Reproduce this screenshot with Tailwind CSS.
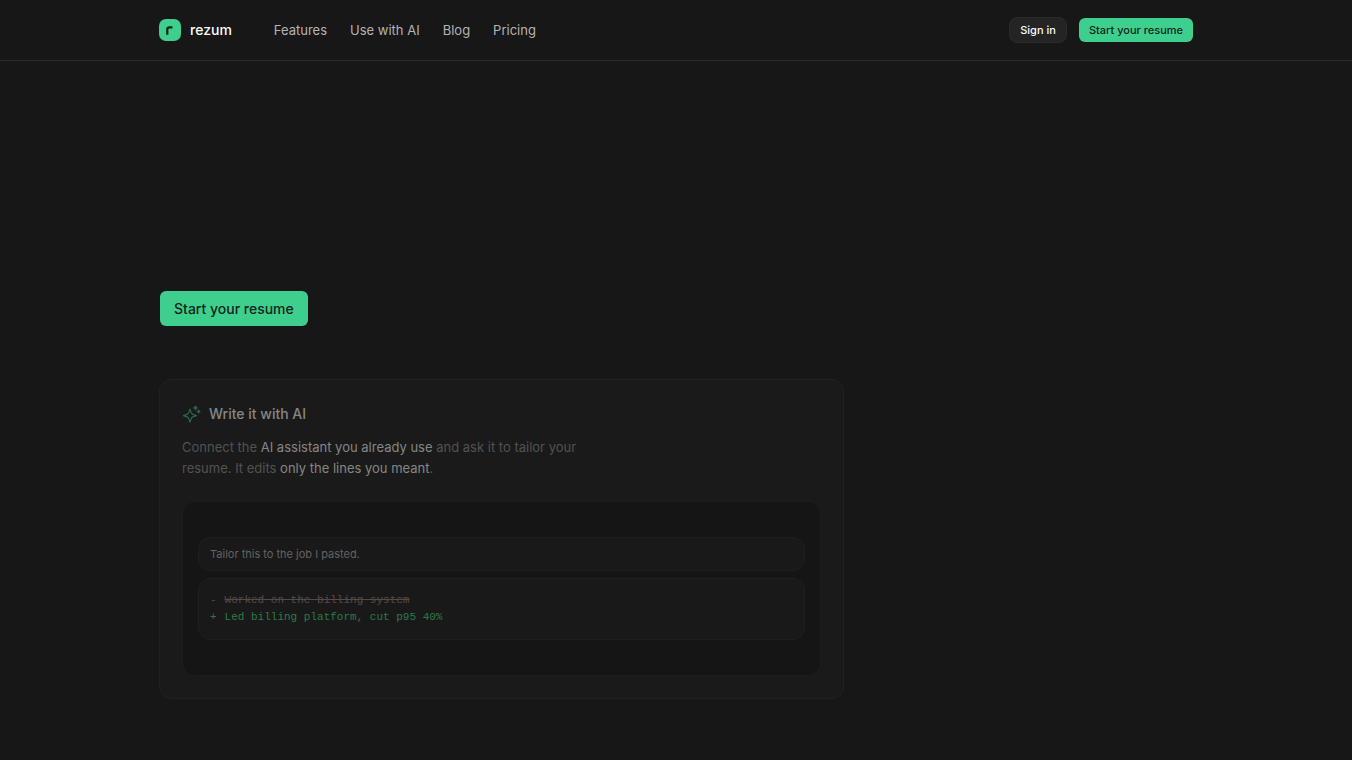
<!DOCTYPE html>
<html lang="en">
<head>
  <meta charset="UTF-8">
  <meta name="viewport" content="width=device-width, initial-scale=1.0">
  <title>rezum</title>
  <script src="https://cdn.jsdelivr.net/npm/@tailwindcss/browser@4"></script>
</head>
<body class="bg-[#171717] min-h-screen font-['Inter',sans-serif] text-[#fafafa] antialiased">
  <header class="border-b border-[#2c2c2c]">
    <div class="max-w-[1082px] mx-auto px-6 h-15 flex items-center justify-between">
      <div class="flex items-center gap-[42px]">
        <a href="#" class="flex items-center gap-[9px]">
          <svg class="size-[22px]" viewBox="0 0 22 22" fill="none" aria-hidden="true">
            <rect width="22" height="22" rx="7" fill="#3ecf8e"/>
            <path d="M8.3 15.8V10.4Q8.3 8.4 10.3 8.4H13.4" stroke="#10241a" stroke-width="2.2"/>
          </svg>
          <span class="text-sm font-medium">rezum</span>
        </a>
        <nav class="flex items-center gap-[23px] text-[13px] leading-5 text-[#b4b4b4]">
          <a href="#">Features</a>
          <a href="#">Use with AI</a>
          <a href="#">Blog</a>
          <a href="#">Pricing</a>
        </nav>
      </div>
      <div class="flex items-center gap-3 text-[11px] leading-4 font-medium">
        <button class="h-[26px] px-[10px] rounded-lg bg-[#242424] border border-[#2a2a2a]">Sign in</button>
        <button class="h-6 px-[10px] rounded-md bg-[#3ecf8e] text-[#10241a]">Start your resume</button>
      </div>
    </div>
  </header>

  <main class="max-w-[1082px] mx-auto px-6 pt-[230px] pb-15">
    <button class="block h-[35px] px-[14px] ml-px rounded-md bg-[#3ecf8e] text-[#10241a] text-sm font-medium">Start your resume</button>

    <section class="mt-[53px] max-w-[685px] rounded-xl bg-[#1a1a1a] border border-[#212121] p-[22px]">
      <h2 class="flex items-center gap-2 text-sm leading-6 font-medium text-[#868686]">
        <svg class="size-[19px] text-[#28694b]" viewBox="0 0 24 24" fill="none" stroke="currentColor" stroke-width="1.5" stroke-linecap="round" stroke-linejoin="round" aria-hidden="true">
          <path d="M10 5.2 11.6 9.6Q12.2 11.2 13.8 11.8L18.2 13.4 13.8 15Q12.2 15.6 11.6 17.2L10 21.6 8.4 17.2Q7.8 15.6 6.2 15L1.8 13.4 6.2 11.8Q7.8 11.2 8.4 9.6Z"/>
          <path d="M17 1.4Q17.2 3.4 19.2 3.6 17.2 3.8 17 5.8 16.8 3.8 14.8 3.6 16.8 3.4 17 1.4Z"/>
          <path d="M21 6.4Q21.2 8 22.8 8.2 21.2 8.4 21 10 20.8 8.4 19.2 8.2 20.8 8 21 6.4Z"/>
        </svg>
        Write it with AI
      </h2>
      <p class="mt-[11px] max-w-[400px] text-[13px] leading-[21px] text-[#525252]">Connect the <span class="text-[#868686]">AI assistant you already use</span> and ask it to tailor your resume. It edits <span class="text-[#868686]">only the lines you meant</span>.</p>
      <div class="mt-[22px] rounded-xl bg-[#151515] border border-[#1d1d1d] px-[15px] py-[35px] space-y-[7px]">
        <div class="rounded-xl bg-[#191919] border border-[#1f1f1f] px-[11px] py-2 text-[11px] leading-4 text-[#636363]">Tailor this to the job I pasted.</div>
        <div class="rounded-xl bg-[#191919] border border-[#1f1f1f] px-[11px] py-[13px] text-[11px] leading-[17px] font-['Liberation_Mono',monospace]">
          <div class="flex gap-2 text-[#554a4a]"><span>-</span><del>Worked on the billing system</del></div>
          <div class="flex gap-2 text-[#2c7a4b]"><span>+</span><span>Led billing platform, cut p95 40%</span></div>
        </div>
      </div>
    </section>
  </main>
</body>
</html>
